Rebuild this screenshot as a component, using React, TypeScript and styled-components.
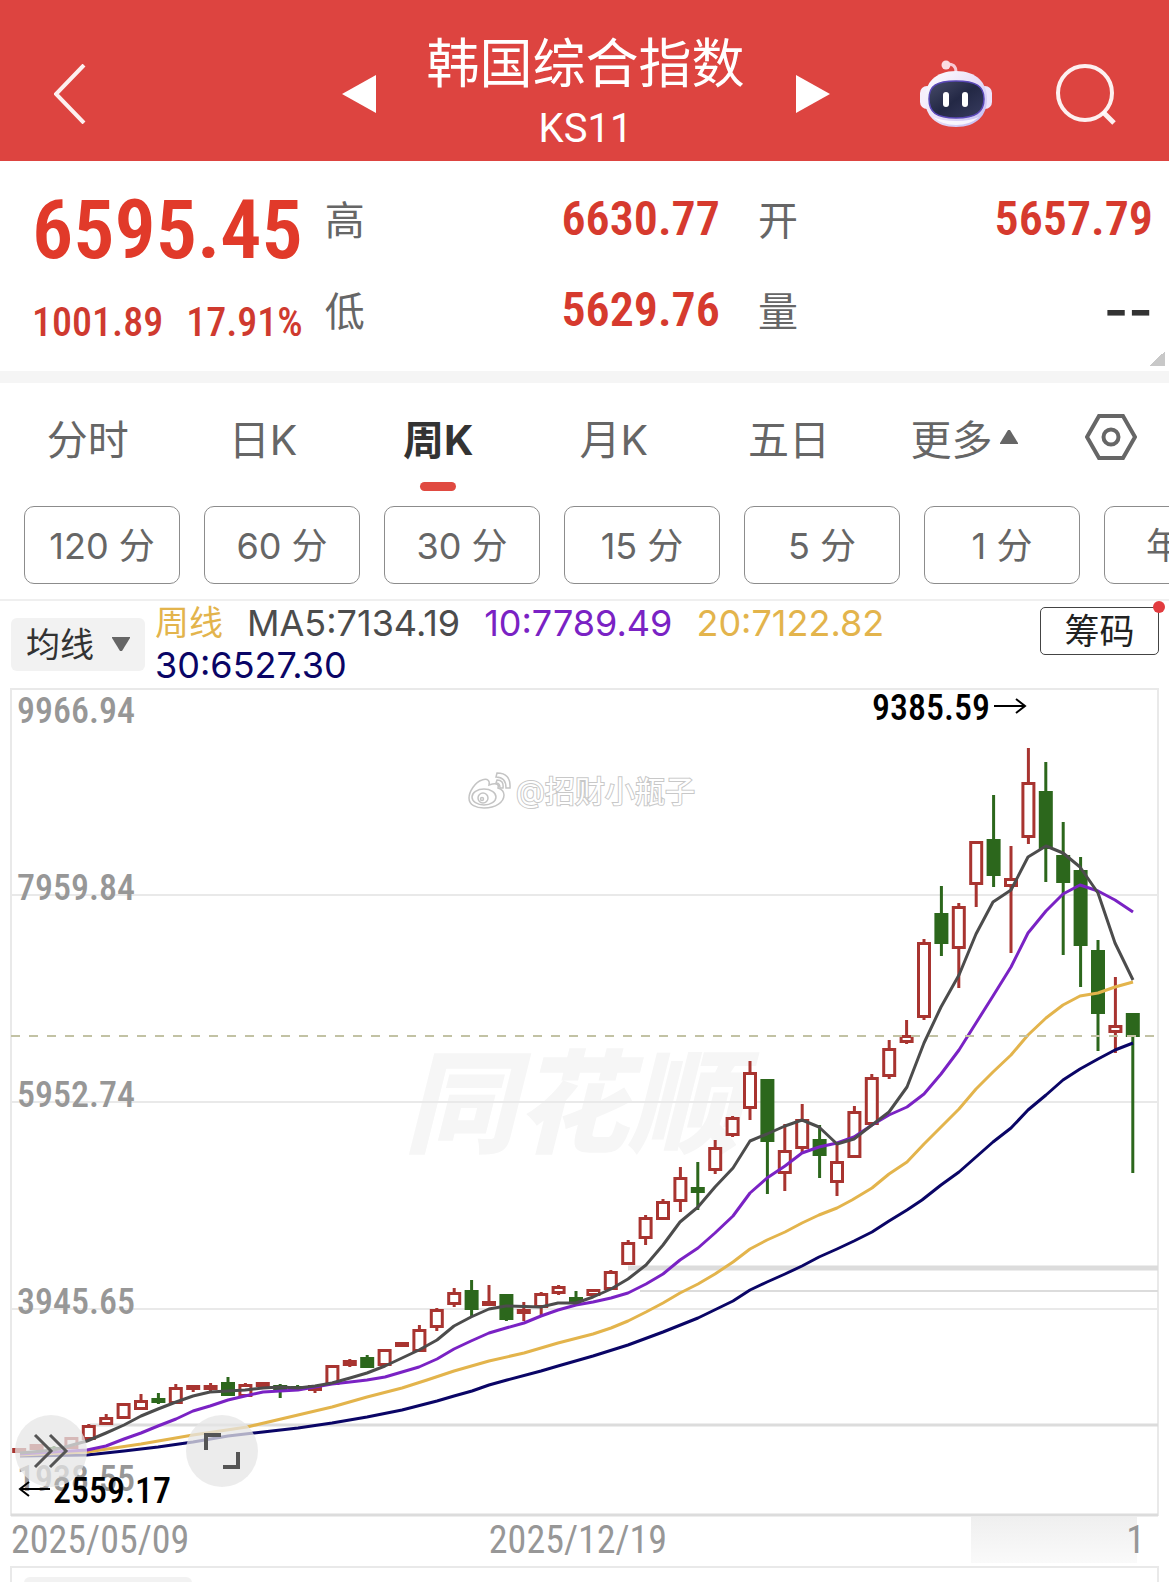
import React, { useState } from 'react';
import styled, { createGlobalStyle } from 'styled-components';

const sans = 'Inter, "Noto Sans CJK SC", sans-serif';
const din = '"Roboto Condensed", Roboto, "Noto Sans CJK SC", sans-serif';
const color = {
  brand: '#dd4440',
  up: '#e13a2a',
  text: '#333333',
  sub: '#666666',
  muted: '#979797',
  line: '#e9e9e9',
  ma5: '#4c4c4c',
  ma10: '#7a22c4',
  ma20: '#e3b44c',
  ma30: '#0a0566',
};

const GlobalStyle = createGlobalStyle`
  *, *::before, *::after { box-sizing: border-box; }
  body { margin: 0; background: #fff; overflow-x: hidden; font-family: ${sans}; color: ${color.text}; }
  button, select { font: inherit; color: inherit; border: 0; padding: 0; margin: 0; background: none; cursor: pointer; }
  svg { display: block; }
`;

const Page = styled.div`
  overflow: hidden;
`;

/* ---------- header ---------- */

const Header = styled.header`
  display: grid;
  grid-template-columns: 1fr auto 1fr;
  align-items: center;
  height: 161px;
  padding: 26px 52px 0 54px;
  background: ${color.brand};
  color: #fff;
`;

const Switcher = styled.div`
  display: flex;
  align-items: center;
  gap: 51px;
`;

const TitleBlock = styled.div`
  text-align: center;
`;

const Title = styled.h1`
  margin: 0;
  font-size: 53px;
  line-height: 70px;
  font-weight: 400;
`;

const Code = styled.div`
  font-family: Roboto, sans-serif;
  font-size: 40px;
  line-height: 60px;
`;

const Actions = styled.div`
  display: flex;
  align-items: center;
  justify-content: flex-end;
  gap: 62px;
`;

/* ---------- quote ---------- */

const Quote = styled.section`
  position: relative;
  display: flex;
  gap: 22px;
  height: 222px;
  padding: 22px 16px 0 32px;
  border-bottom: 12px solid #f5f5f5;
  font-family: ${din};
`;

const PriceBlock = styled.div`
  flex: none;
  color: ${color.up};
`;

const Price = styled.div`
  font-size: 82px;
  line-height: 94px;
  font-weight: 600;
`;

const Change = styled.div`
  display: flex;
  justify-content: space-between;
  margin-top: 22px;
  font-size: 40px;
  line-height: 48px;
  font-weight: 500;
  color: #cf3a2f;
`;

const Stats = styled.dl`
  flex: 1;
  display: grid;
  grid-template-columns: 1fr 1fr;
  grid-auto-rows: 91px;
  column-gap: 38px;
  margin: 0;
`;

const Stat = styled.div`
  display: flex;
  justify-content: space-between;
  line-height: 72px;
  dt { font-family: ${sans}; font-size: 40px; line-height: 76px; color: ${color.sub}; }
`;

const StatValue = styled.dd<{ $plain?: boolean }>`
  margin: 0;
  font-family: ${p => (p.$plain ? sans : din)};
  font-size: ${p => (p.$plain ? 53 : 48)}px;
  font-weight: 600;
  color: ${p => (p.$plain ? color.text : '#d63a2e')};
`;

const Corner = styled.span`
  position: absolute;
  right: 4px;
  bottom: 5px;
  width: 15px;
  height: 15px;
  background: linear-gradient(135deg, transparent 50%, #c8c8c8 50%);
`;

/* ---------- tabs and chips ---------- */

const Tabs = styled.nav`
  display: grid;
  grid-template-columns: repeat(6, 3fr) 2fr;
  height: 123px;
`;

const Tab = styled.button<{ $active?: boolean }>`
  position: relative;
  display: flex;
  justify-content: center;
  align-items: center;
  gap: 8px;
  height: 108px;
  font-size: 41px;
  font-weight: ${p => (p.$active ? 700 : 400)};
  color: ${p => (p.$active ? color.text : color.sub)};
  &::after {
    content: '';
    display: ${p => (p.$active ? 'block' : 'none')};
    position: absolute;
    bottom: 0;
    left: calc(50% - 18px);
    width: 36px;
    height: 9px;
    border-radius: 5px;
    background: #e04a41;
  }
`;

const Chips = styled.div`
  display: flex;
  gap: 24px;
  padding: 0 24px 15px;
  overflow: hidden;
  border-bottom: 2px solid #efefef;
`;

const Chip = styled.button`
  flex: none;
  width: 156px;
  height: 78px;
  padding-bottom: 4px;
  border: 1px solid #8c8c8c;
  border-radius: 10px;
  font-size: 36px;
  color: ${color.sub};
  word-break: keep-all;
`;

/* ---------- indicator bar ---------- */

const Indicators = styled.div`
  display: flex;
  align-items: flex-start;
  height: 87px;
  padding: 1px 10px 0 11px;
`;

const MaPicker = styled.label`
  position: relative;
  display: flex;
  flex: none;
  margin: 16px 10px 0 0;
  select {
    appearance: none;
    width: 134px;
    height: 53px;
    padding-left: 15px;
    border-radius: 6px;
    background: #f2f2f2;
    font-size: 34px;
    color: ${color.text};
  }
  svg { position: absolute; right: 15px; top: 19px; pointer-events: none; }
`;

const Legend = styled.div`
  flex: 1;
  display: flex;
  flex-wrap: wrap;
  column-gap: 24px;
  max-width: 780px;
  font-size: 36px;
  line-height: 42px;
`;

const LegendItem = styled.span<{ $color: string; $size?: number }>`
  color: ${p => p.$color};
  font-size: ${p => p.$size ?? 36}px;
`;

const ChipsButton = styled.button`
  position: relative;
  width: 119px;
  height: 48px;
  margin: 5px 0 0 auto;
  border: 1px solid #444;
  border-radius: 5px;
  font-size: 35px;
  line-height: 44px;
  color: #222;
  &::after {
    content: '';
    position: absolute;
    top: -7px;
    right: -7px;
    width: 12px;
    height: 12px;
    border-radius: 50%;
    background: #e23b3f;
  }
`;

/* ---------- chart ---------- */

const ChartArea = styled.section`
  position: relative;
  margin: 0 10px;
`;

const Chart = styled.svg`
  width: 100%;
  height: auto;
  font-family: ${din};
`;

const RoundButton = styled.button<{ $left: number }>`
  position: absolute;
  left: ${p => p.$left}px;
  bottom: 30px;
  display: grid;
  place-items: center;
  width: 72px;
  height: 72px;
  border-radius: 50%;
  background: rgba(230, 230, 230, 0.75);
`;

const Dates = styled.div`
  display: grid;
  grid-template-columns: 1fr auto 1fr;
  align-items: center;
  height: 49px;
  padding: 0 24px 3px 11px;
  font: 400 38px/46px ${din};
  color: ${color.muted};
`;

const LastDate = styled.span`
  justify-self: end;
  width: 174px;
  text-align: right;
  background: linear-gradient(180deg, #efefef, #fafafa) no-repeat 0 0 / 166px 100%;
`;

const SubPanel = styled.section`
  height: 16px;
  margin: 0 10px;
  padding: 9px 12px 0;
  overflow: hidden;
  border: 2px solid ${color.line};
  border-bottom: 0;
  &::before {
    content: '';
    display: block;
    width: 168px;
    height: 30px;
    border-radius: 6px;
    background: #f2f2f2;
  }
`;

/* ---------- data ---------- */

type Candle = [up: 0 | 1, high: number, top: number, bottom: number, low: number];

const candles: Candle[] = [
  [1, 1449, 1449, 1452, 1452], [1, 1444, 1445, 1449, 1450], [0, 1446, 1447, 1450, 1450], [1, 1437, 1438, 1448, 1449],
  [1, 1424, 1426, 1439, 1440], [1, 1414, 1418, 1424, 1424], [1, 1404, 1404, 1418, 1418], [1, 1394, 1401, 1409, 1410],
  [0, 1393, 1398, 1403, 1404], [1, 1384, 1388, 1403, 1403], [1, 1385, 1386, 1389, 1392], [1, 1383, 1386, 1389, 1392],
  [0, 1377, 1382, 1396, 1396], [1, 1383, 1385, 1396, 1396], [1, 1382, 1383, 1386, 1386], [0, 1384, 1385, 1390, 1398],
  [0, 1385, 1386, 1388, 1388], [1, 1385, 1386, 1390, 1393], [1, 1365, 1366, 1384, 1384], [1, 1359, 1361, 1365, 1367],
  [0, 1355, 1357, 1368, 1368], [1, 1349, 1350, 1365, 1365], [1, 1342, 1343, 1346, 1347], [1, 1325, 1330, 1351, 1352],
  [1, 1308, 1310, 1327, 1331], [1, 1288, 1293, 1304, 1307], [0, 1280, 1290, 1310, 1316], [1, 1285, 1302, 1305, 1306],
  [0, 1294, 1294, 1320, 1321], [1, 1302, 1310, 1313, 1321], [1, 1292, 1294, 1307, 1315], [1, 1285, 1287, 1293, 1295],
  [0, 1291, 1297, 1302, 1304], [1, 1289, 1290, 1295, 1295], [1, 1270, 1272, 1289, 1290], [1, 1240, 1243, 1264, 1265],
  [1, 1215, 1218, 1238, 1245], [1, 1199, 1202, 1219, 1220], [1, 1167, 1178, 1201, 1212], [0, 1162, 1187, 1193, 1210],
  [1, 1140, 1148, 1170, 1174], [1, 1116, 1118, 1135, 1137], [1, 1061, 1073, 1108, 1120], [0, 1079, 1079, 1142, 1194],
  [1, 1124, 1151, 1173, 1191], [1, 1104, 1120, 1148, 1153], [0, 1125, 1139, 1156, 1178], [1, 1143, 1162, 1182, 1196],
  [1, 1106, 1112, 1157, 1158], [1, 1074, 1078, 1124, 1126], [1, 1040, 1049, 1076, 1079], [1, 1020, 1036, 1042, 1044],
  [1, 939, 943, 1017, 1020], [0, 886, 913, 944, 956], [1, 903, 907, 948, 988], [1, 841, 842, 884, 907],
  [0, 795, 839, 876, 887], [1, 846, 879, 886, 953], [1, 748, 783, 837, 844], [0, 762, 791, 849, 882],
  [0, 822, 855, 883, 955], [0, 857, 870, 946, 987], [0, 940, 950, 1014, 1051], [1, 977, 1026, 1032, 1053],
  [0, 1013, 1013, 1037, 1173],
];

const candleX = (i: number) => 19.2 + i * 17.4;

const averages = [
  { stroke: color.ma30, points: '20,1456 87,1455 124,1451 158,1447 193,1442 228,1436 263,1432 298,1428 332,1423 367,1417 402,1410 437,1401 454,1396 472,1391 489,1385 507,1380 541,1371 558,1366 593,1356 628,1345 663,1332 698,1318 733,1301 750,1290 767,1282 785,1274 802,1266 819,1257 837,1249 854,1241 872,1232 889,1221 907,1210 922,1200 941,1185 959,1172 976,1157 993,1142 1011,1128 1028,1110 1046,1095 1063,1080 1080,1069 1098,1059 1115,1050 1133,1043' },
  { stroke: color.ma20, points: '20,1455 87,1452 141,1444 193,1435 247,1427 298,1415 332,1407 367,1397 402,1388 427,1380 454,1371 489,1361 524,1353 558,1343 593,1334 611,1328 628,1321 646,1312 663,1303 680,1293 698,1284 715,1274 733,1262 750,1249 767,1240 785,1232 802,1223 819,1215 837,1208 852,1200 872,1188 889,1174 907,1162 924,1144 941,1127 959,1109 976,1089 993,1072 1011,1055 1028,1035 1046,1018 1063,1005 1080,996 1098,993 1115,987 1133,982' },
  { stroke: color.ma10, points: '20,1454 87,1450 106,1446 124,1439 141,1433 158,1426 176,1419 193,1411 210,1406 228,1400 245,1396 263,1392 280,1391 298,1390 315,1387 332,1384 350,1382 367,1380 385,1377 402,1372 419,1367 437,1359 454,1349 471,1341 489,1333 506,1328 524,1323 541,1316 558,1310 576,1305 593,1302 611,1298 628,1293 646,1284 663,1274 680,1260 698,1248 715,1233 733,1216 750,1193 767,1178 785,1166 802,1153 819,1147 837,1143 854,1137 872,1125 889,1115 907,1107 924,1094 941,1074 959,1050 976,1023 993,996 1011,967 1028,933 1046,911 1063,894 1080,885 1098,891 1115,900 1133,912' },
  { stroke: color.ma5, points: '20,1453 54,1450 87,1441 106,1433 124,1425 141,1416 158,1409 176,1402 193,1396 210,1392 228,1391 245,1390 263,1388 280,1387 298,1388 315,1386 332,1383 350,1378 367,1373 385,1366 402,1358 419,1350 437,1340 454,1326 471,1317 489,1309 506,1306 541,1307 558,1303 576,1303 593,1297 611,1289 628,1279 646,1265 663,1245 680,1222 698,1207 715,1187 733,1168 750,1141 767,1134 785,1126 802,1120 819,1127 837,1144 854,1139 872,1125 889,1112 907,1087 924,1043 941,1007 959,975 976,934 993,902 1011,890 1028,857 1046,846 1063,853 1080,867 1098,893 1115,943 1133,980' },
];

const axis = [
  { y: 723, label: '9966.94' },
  { y: 900, label: '7959.84' },
  { y: 1107, label: '5952.74' },
  { y: 1314, label: '3945.65' },
  { y: 1491, label: '1938.55' },
];

const tabs = ['分时', '日K', '周K', '月K', '五日'];
const periods = ['120 分', '60 分', '30 分', '15 分', '5 分', '1 分', '年线'];

/* ---------- icons ---------- */

const Back = () => (
  <svg width="32" height="60" viewBox="0 0 32 60" fill="none" stroke="#fff" strokeOpacity=".92" strokeWidth="4">
    <path d="M30 1 2 30l28 29" />
  </svg>
);

const Triangle = ({ right }: { right?: boolean }) => (
  <svg width="34" height="38" viewBox="0 0 34 38" fill="#fff">
    <path d={right ? 'M0 0v38l34-19z' : 'M34 0v38L0 19z'} />
  </svg>
);

const Robot = () => (
  <svg width="74" height="68" viewBox="0 0 74 68">
    <defs>
      <linearGradient id="shell" x1="0" y1="0" x2="1" y2="1">
        <stop offset="0" stopColor="#fff" />
        <stop offset=".5" stopColor="#e9dff7" />
        <stop offset="1" stopColor="#bdb8f3" />
      </linearGradient>
      <linearGradient id="visor" x1="0" y1="0" x2="1" y2="1">
        <stop offset="0" stopColor="#484c69" />
        <stop offset=".5" stopColor="#232845" />
        <stop offset="1" stopColor="#383c60" />
      </linearGradient>
    </defs>
    <path d="M27 4q10-1 10 8" fill="none" stroke="#f7c9d3" strokeWidth="3" />
    <circle cx="27" cy="5" r="4.500" fill="#fbdde3" />
    <rect x="1" y="26" width="14" height="23" rx="7" fill="#f6eefb" />
    <rect x="59" y="26" width="14" height="23" rx="7" fill="#ece3fb" />
    <path d="M37 11c21 0 31 12 31 28S58 67 37 67 6 55 6 39s10-28 31-28z" fill="url(#shell)" />
    <path d="M37 65q-14 0-23-8 9 4 23 4t23-4q-9 8-23 8z" fill="#fff" fillOpacity=".8" />
    <path d="M37 21c20 0 28 5 28 18S57 58 37 58 10 52 10 39s7-18 27-18z" fill="url(#visor)" stroke="#5a48b8" strokeWidth="1.500" />
    <rect x="24" y="32" width="6" height="15" rx="3" fill="#fff" />
    <rect x="43" y="32" width="6" height="15" rx="3" fill="#fff" />
  </svg>
);

const Search = () => (
  <svg width="62" height="62" viewBox="0 0 62 62" fill="none" stroke="#fff" strokeOpacity=".92" strokeWidth="4">
    <circle cx="30" cy="30" r="27" />
    <path d="m48 49 11 11" strokeWidth="5" />
  </svg>
);

const Gear = () => (
  <svg width="52" height="50" viewBox="0 0 52 50" fill="none" stroke={color.sub} strokeWidth="4">
    <path d="M14 4h24l12 21-12 21H14L2 25z" />
    <circle cx="26" cy="25" r="7.500" />
  </svg>
);

const Caret = ({ up }: { up?: boolean }) => (
  <svg width="18" height="14" viewBox="0 0 18 14" fill={color.sub}>
    <path d={up ? 'M8 0h2l8 13v1H0v-1z' : 'M0 0h18v1l-8 13H8L0 1z'} />
  </svg>
);

const Weibo = () => (
  <g fill="#fff" stroke="#c4c4c4" strokeWidth="1.500">
    <path d="M482 780c-7 2-13 12-13 18 0 7 7 10 15 10 12 0 20-6 20-13 0-4-3-6-6-7 1-3 0-6-9-3 1-4-1-7-7-5z" />
    <ellipse cx="484" cy="797" rx="12" ry="8" />
    <circle cx="483" cy="798" r="5" />
    <circle cx="482" cy="799" r="1.500" />
    <path d="M497 773q14 0 13 15h-4q0-11-10-11zM497 780q7 0 6 8h-3q0-5-4-5z" />
  </g>
);

export default function App() {
  const [active, setActive] = useState('周K');

  return (
    <Page>
      <GlobalStyle />
      <Header>
        <button aria-label="返回"><Back /></button>
        <Switcher>
          <button aria-label="上一个"><Triangle /></button>
          <TitleBlock>
            <Title>韩国综合指数</Title>
            <Code>KS11</Code>
          </TitleBlock>
          <button aria-label="下一个"><Triangle right /></button>
        </Switcher>
        <Actions>
          <button aria-label="智能助手"><Robot /></button>
          <button aria-label="搜索"><Search /></button>
        </Actions>
      </Header>

      <Quote>
        <PriceBlock>
          <Price>6595.45</Price>
          <Change><span>1001.89</span><span>17.91%</span></Change>
        </PriceBlock>
        <Stats>
          <Stat><dt>高</dt><StatValue>6630.77</StatValue></Stat>
          <Stat><dt>开</dt><StatValue>5657.79</StatValue></Stat>
          <Stat><dt>低</dt><StatValue>5629.76</StatValue></Stat>
          <Stat><dt>量</dt><StatValue $plain>--</StatValue></Stat>
        </Stats>
        <Corner />
      </Quote>

      <Tabs>
        {tabs.map(t => (
          <Tab key={t} $active={t === active} onClick={() => setActive(t)}>{t}</Tab>
        ))}
        <Tab>更多<Caret up /></Tab>
        <Tab aria-label="设置"><Gear /></Tab>
      </Tabs>

      <Chips>
        {periods.map(p => <Chip key={p}>{p}</Chip>)}
      </Chips>

      <Indicators>
        <MaPicker>
          <select aria-label="指标" defaultValue="均线"><option>均线</option></select>
          <Caret />
        </MaPicker>
        <Legend>
          <LegendItem $color={color.ma20} $size={34}>周线</LegendItem>
          <LegendItem $color={color.ma5}>MA5:7134.19</LegendItem>
          <LegendItem $color={color.ma10}>10:7789.49</LegendItem>
          <LegendItem $color={color.ma20}>20:7122.82</LegendItem>
          <LegendItem $color={color.ma30}>30:6527.30</LegendItem>
        </Legend>
        <ChipsButton>筹码</ChipsButton>
      </Indicators>

      <ChartArea>
        <Chart viewBox="10 688 1149 829" role="img" aria-label="周K线图">
          <text x="404" y="1144" fontSize="112" fontWeight="900" fontStyle="italic" fill="#f6f6f6">同花顺</text>
          <g stroke={color.line} strokeWidth="2">
            <path d="M11 895H1158M11 1102H1158M11 1309H1158" />
            <rect x="11" y="689" width="1147" height="826" fill="none" />
          </g>
          <g stroke="#dcdcdc" fill="none">
            <path d="M628 1268H1158" strokeWidth="5" />
            <path d="M640 1291H1158" strokeWidth="2" />
            <path d="M90 1425H1158" strokeWidth="3" />
            <path d="M11 1515H1158" strokeWidth="3" />
          </g>
          <g fontSize="36" fontWeight="500" fill={color.muted}>
            {axis.map(a => <text key={a.label} x="17" y={a.y}>{a.label}</text>)}
          </g>
          {candles.map(([up, high, top, bottom, low], i) => {
            const x = candleX(i);
            const c = up ? '#a83430' : '#2c671c';
            return (
              <g key={i} stroke={c} strokeWidth="3">
                <path d={`M${x} ${high}V${top}M${x} ${bottom}V${low}`} />
                {up
                  ? <rect x={x - 5.5} y={top + 0.5} width="11" height={Math.max(bottom - top - 1, 1)} fill="#fff" />
                  : <rect x={x - 7} y={top} width="14" height={bottom - top} fill={c} stroke="none" />}
              </g>
            );
          })}
          {averages.map(a => (
            <polyline key={a.stroke} points={a.points} fill="none" stroke={a.stroke} strokeWidth="3" strokeLinejoin="round" />
          ))}
          <path d="M11 1036H1158" stroke="#c2c2a4" strokeWidth="2" strokeDasharray="9 9" />
          <g fontSize="36" fontWeight="500" fill="#000">
            <text x="872" y="720">9385.59</text>
            <text x="53" y="1503">2559.17</text>
          </g>
          <g fill="none" stroke="#000" strokeWidth="2">
            <path d="M994 706h31m-9-7 9 7-9 7" />
            <path d="M50 1489H20m9-7-9 7 9 7" />
          </g>
          <Weibo />
          <text x="516" y="802" fontSize="30" fill="#fff" stroke="#c8c8c8" strokeWidth="2" paintOrder="stroke" fontFamily={sans}>@招财小瓶子</text>
        </Chart>
        <RoundButton $left={5} aria-label="展开">
          <svg width="36" height="36" viewBox="0 0 36 36" fill="none" stroke="#555" strokeWidth="3">
            <path d="m2 2 16 16L2 34M17 2l16 16-16 16" />
          </svg>
        </RoundButton>
        <RoundButton $left={176} aria-label="全屏">
          <svg width="38" height="38" viewBox="0 0 38 38" fill="none" stroke="#555" strokeWidth="4">
            <path d="M3 18V3h15M35 20v15H20" />
          </svg>
        </RoundButton>
      </ChartArea>

      <Dates>
        <span>2025/05/09</span>
        <span>2025/12/19</span>
        <LastDate>1</LastDate>
      </Dates>
      <SubPanel />
    </Page>
  );
}
